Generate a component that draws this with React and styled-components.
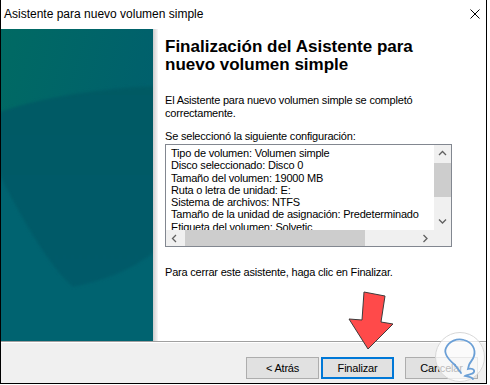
import React from "react";
import styled, { createGlobalStyle } from "styled-components";

const GlobalStyle = createGlobalStyle`
  html, body {
    margin: 0;
    padding: 0;
    background: #fff;
  }
  body {
    font-family: "Liberation Sans", Arial, sans-serif;
    color: #000;
  }
`;

const Window = styled.div`
  position: relative;
  box-sizing: border-box;
  width: 487px;
  height: 384px;
  border: 1px solid #000;
  border-top: none;
  background: #fff;
  display: flex;
  flex-direction: column;
`;

const TitleBar = styled.div`
  height: 29px;
  flex-shrink: 0;
  display: flex;
  align-items: center;
  justify-content: space-between;
  padding: 0 6px 2px 3px;
  box-sizing: border-box;
  font-size: 12px;
`;

const Body = styled.div`
  height: 312px;
  flex-shrink: 0;
  display: flex;
`;

const SidePanel = styled.div`
  width: 152px;
  flex-shrink: 0;
  background: #00636f;
  svg {
    display: block;
  }
`;

const Shade = styled.div`
  width: 5px;
  flex-shrink: 0;
  background: linear-gradient(to right, #cdcdcd, #e6e6e6 60%, #f8f8f8);
`;

const Content = styled.div`
  flex: 1;
  padding: 9px 0 0 7px;
  font-size: 11px;
  letter-spacing: -0.2px;
  line-height: 13px;
`;

const Heading = styled.h1`
  margin: 0;
  font-size: 17px;
  line-height: 18px;
  font-weight: bold;
  letter-spacing: 0;
`;

const Text = styled.p`
  margin: ${(p) => p.$top}px 0 0 0;
`;

const ListBox = styled.div`
  margin-top: 1px;
  width: 287px;
  height: 103px;
  box-sizing: border-box;
  border: 1px solid #828790;
  display: grid;
  grid-template-columns: 1fr 17px;
  grid-template-rows: 1fr 16px;
`;

const ListText = styled.div`
  padding: 2px 0 0 5px;
  overflow: hidden;
  white-space: nowrap;
  line-height: 12.3px;
`;

const VScroll = styled.div`
  background: #f0f0f0;
  display: flex;
  flex-direction: column;
`;

const HScroll = styled.div`
  background: #f0f0f0;
  display: flex;
  align-items: center;
`;

const Corner = styled.div`
  background: #f0f0f0;
`;

const ArrowBtn = styled.div`
  width: 17px;
  height: 17px;
  flex-shrink: 0;
  display: flex;
  align-items: center;
  justify-content: center;
`;

const VTrack = styled.div`
  flex: 1;
  padding-top: 1px;
`;

const VThumb = styled.div`
  width: 17px;
  height: 34px;
  background: #cdcdcd;
`;

const HTrack = styled.div`
  flex: 1;
  height: 16px;
  padding-left: 2px;
  display: flex;
  align-items: center;
`;

const HThumb = styled.div`
  width: 180px;
  height: 16px;
  background: #cdcdcd;
`;

const Footer = styled.div`
  flex: 1;
  border-top: 1px solid #a0a0a0;
  box-shadow: inset 0 1px 0 #fff;
  background: #f0f0f0;
  display: flex;
  justify-content: flex-end;
  align-items: flex-start;
  padding: 15px 8px 0 0;
`;

const Button = styled.button`
  box-sizing: border-box;
  width: 73px;
  height: 22px;
  margin-left: ${(p) => (p.$spaced ? 11 : 2)}px;
  padding: 0;
  border: ${(p) => (p.$focused ? "2px solid #0078d7" : "1px solid #adadad")};
  background: #e1e1e1;
  font-family: "Liberation Sans", Arial, sans-serif;
  font-size: 11px;
  letter-spacing: -0.2px;
  color: #000;
`;

const RedArrow = styled.svg`
  position: absolute;
  left: 339px;
  top: 286px;
  width: 60px;
  height: 70px;
  overflow: visible;
`;

const Watermark = styled.svg`
  position: absolute;
  left: 434px;
  top: 332px;
  width: 50px;
  height: 52px;
  overflow: visible;
`;

const Chevron = ({ dir }) => {
  const pts = {
    up: "1,5 4.5,1.5 8,5",
    down: "1,1.5 4.5,5 8,1.5",
    left: "5,1 1.5,4.5 5,8",
    right: "1.5,1 5,4.5 1.5,8",
  }[dir];
  const vertical = dir === "up" || dir === "down";
  return (
    <svg width={vertical ? 9 : 7} height={vertical ? 7 : 9}>
      <polyline points={pts} fill="none" stroke="#606060" strokeWidth="1.3" />
    </svg>
  );
};

const PanelArt = () => (
  <svg width="152" height="312" viewBox="0 0 152 312">
    <defs>
      <linearGradient id="topg" x1="0" y1="0" x2="1" y2="0.3">
        <stop offset="0" stopColor="#006a63" />
        <stop offset="1" stopColor="#00606c" />
      </linearGradient>
      <linearGradient id="shield" x1="0" y1="0" x2="0" y2="1">
        <stop offset="0" stopColor="#005a64" />
        <stop offset="1" stopColor="#005a69" />
      </linearGradient>
      <filter id="soft" x="-10%" y="-10%" width="120%" height="120%">
        <feGaussianBlur stdDeviation="1.5" />
      </filter>
    </defs>
    <rect x="0" y="0" width="152" height="312" fill="#00636f" />
    <rect x="0" y="0" width="152" height="150" fill="url(#topg)" />
    <path
      d="M0,150 L0,110 C40,100 100,95 152,95 L152,312 L0,312 Z"
      fill="#00636f"
      filter="url(#soft)"
    />
    <path
      d="M-4,84 C40,68 100,59 156,57 L156,220 C140,236 110,250 72,258 C50,240 20,190 -4,140 Z"
      fill="url(#shield)"
      filter="url(#soft)"
    />
  </svg>
);

const listLines = [
  "Tipo de volumen: Volumen simple",
  "Disco seleccionado: Disco 0",
  "Tamaño del volumen: 19000 MB",
  "Ruta o letra de unidad: E:",
  "Sistema de archivos: NTFS",
  "Tamaño de la unidad de asignación: Predeterminado",
  "Etiqueta del volumen: Solvetic",
];

const App = () => {
  return (
    <>
      <GlobalStyle />
      <Window>
        <TitleBar>
          <span>Asistente para nuevo volumen simple</span>
          <svg width="10" height="10">
            <path d="M0.5,0.5 L9.5,9.5 M9.5,0.5 L0.5,9.5" stroke="#000" strokeWidth="1" />
          </svg>
        </TitleBar>
        <Body>
          <SidePanel>
            <PanelArt />
          </SidePanel>
          <Shade />
          <Content>
            <Heading>
              Finalización del Asistente para
              <br />
              nuevo volumen simple
            </Heading>
            <Text $top={20}>
              El Asistente para nuevo volumen simple se completó
              <br />
              correctamente.
            </Text>
            <Text $top={10}>Se seleccionó la siguiente configuración:</Text>
            <ListBox>
              <ListText>
                {listLines.map((line, idx) => (
                  <div key={idx}>{line}</div>
                ))}
              </ListText>
              <VScroll>
                <ArrowBtn>
                  <Chevron dir="up" />
                </ArrowBtn>
                <VTrack>
                  <VThumb />
                </VTrack>
                <ArrowBtn>
                  <Chevron dir="down" />
                </ArrowBtn>
              </VScroll>
              <HScroll>
                <ArrowBtn>
                  <Chevron dir="left" />
                </ArrowBtn>
                <HTrack>
                  <HThumb />
                </HTrack>
                <ArrowBtn>
                  <Chevron dir="right" />
                </ArrowBtn>
              </HScroll>
              <Corner />
            </ListBox>
            <Text $top={19}>Para cerrar este asistente, haga clic en Finalizar.</Text>
          </Content>
        </Body>
        <Footer>
          <Button>&lt; Atrás</Button>
          <Button $focused>Finalizar</Button>
          <Button $spaced>Cancelar</Button>
        </Footer>

        <RedArrow viewBox="0 0 60 70">
          <polygon
            points="24,6 45,10 41,36 53,38 28,63 9,33 22,34"
            fill="#ff4a4a"
            stroke="#3c3c3c"
            strokeWidth="1"
            strokeLinejoin="round"
          />
        </RedArrow>

        <Watermark viewBox="0 0 50 52">
          <circle cx="25" cy="25" r="24.5" fill="#fff" fillOpacity="0.72" stroke="#d8d8d8" strokeWidth="1" />
          <path
            d="M20,33 C14,28 8,22 11,16 C14,9 22,6 29,8 C37,10 41,17 39,24 C38,28 35,30 34,33 L33,37 C36,36 40,37 39,40 C38,43 32,42 30,44 C33,45 37,45 38,47"
            fill="none"
            stroke="#6a9fd6"
            strokeWidth="1.8"
            strokeLinecap="round"
          />
          <path d="M20,33 C22,36 24,38 26,41" fill="none" stroke="#6a9fd6" strokeWidth="1.8" strokeLinecap="round" />
        </Watermark>
      </Window>
    </>
  );
};

export default App;
